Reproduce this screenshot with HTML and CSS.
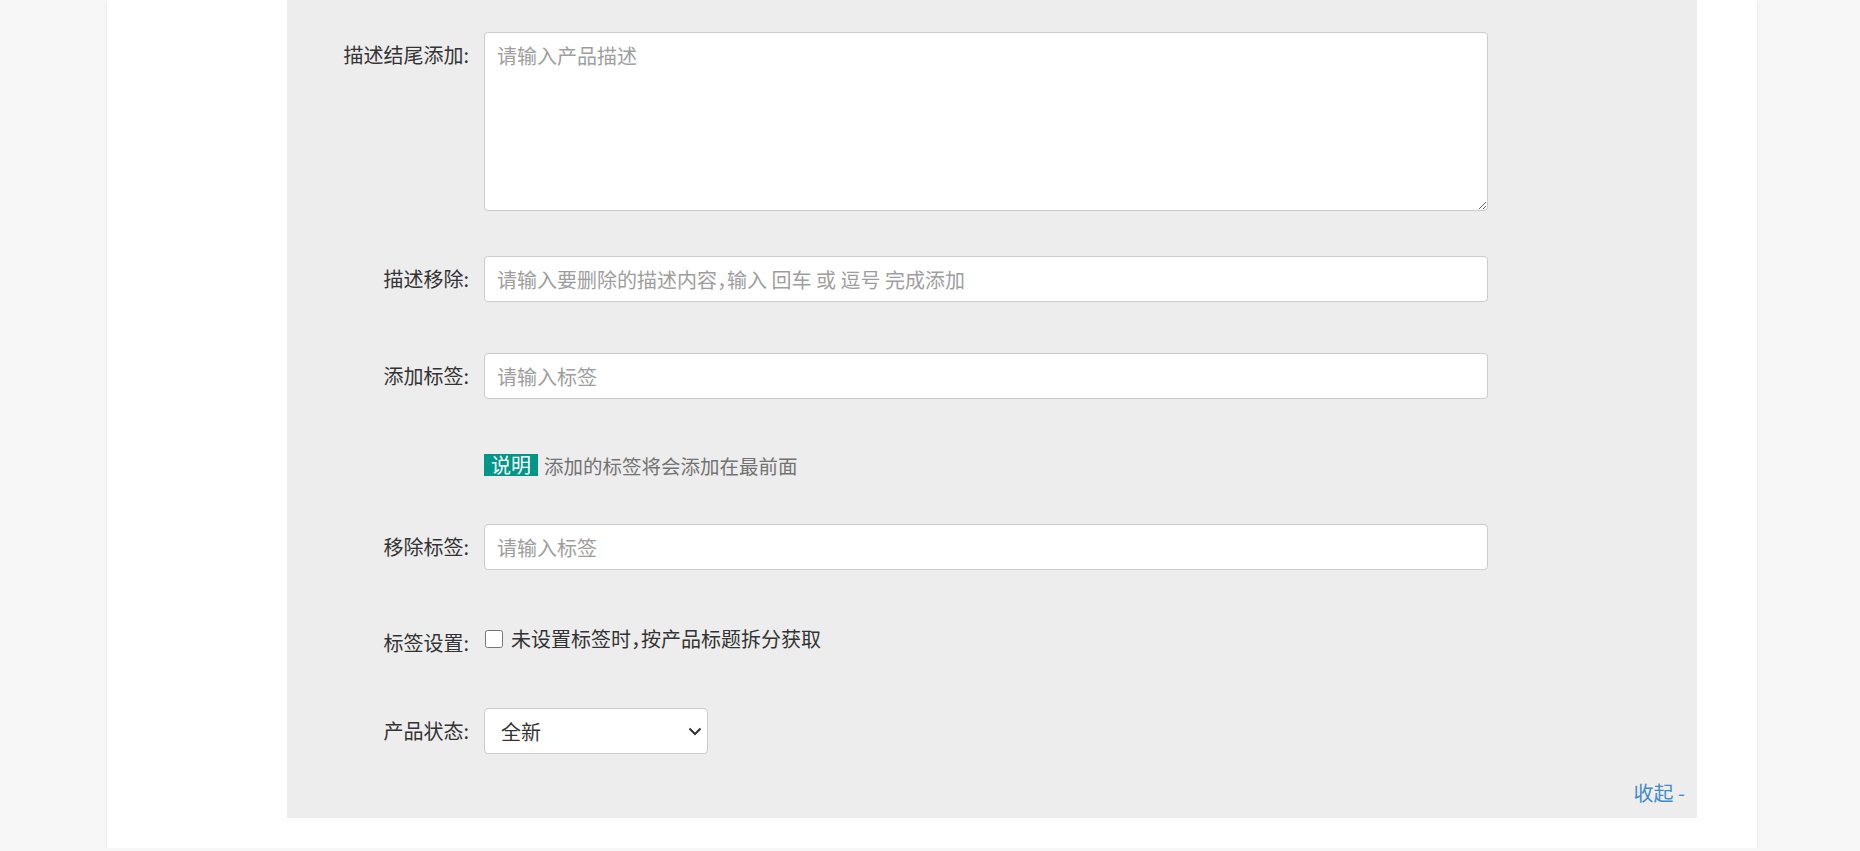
FILE: index.html
```html
<!DOCTYPE html>
<html lang="zh-CN">
<head>
    <meta charset="UTF-8">
    <meta name="viewport" content="width=device-width, initial-scale=1.0">
    <title>产品设置</title>
    <link rel="stylesheet" href="styles.css">
</head>
<body>

    <div class="card">
        <div class="panel">

            <div class="row row-area">
                <label class="label">描述结尾添加:</label>
                <div class="field">
                    <textarea class="control area" placeholder="请输入产品描述"></textarea>
                </div>
            </div>

            <div class="row row-remove">
                <label class="label">描述移除:</label>
                <div class="field">
                    <input class="control" type="text" placeholder="请输入要删除的描述内容，输入 回车 或 逗号 完成添加">
                </div>
            </div>

            <div class="row row-tag">
                <label class="label">添加标签:</label>
                <div class="field">
                    <input class="control" type="text" placeholder="请输入标签">
                </div>
            </div>

            <div class="row row-help">
                <div class="label"></div>
                <div class="field help"><span class="badge">说明</span>添加的标签将会添加在最前面</div>
            </div>

            <div class="row row-untag">
                <label class="label">移除标签:</label>
                <div class="field">
                    <input class="control" type="text" placeholder="请输入标签">
                </div>
            </div>

            <div class="row row-check">
                <label class="label">标签设置:</label>
                <div class="field check">
                    <input type="checkbox" id="split">
                    <label for="split">未设置标签时，按产品标题拆分获取</label>
                </div>
            </div>

            <div class="row row-state">
                <label class="label">产品状态:</label>
                <div class="field">
                    <div class="select-wrap">
                        <select class="control state">
                            <option>全新</option>
                            <option>二手</option>
                        </select>
                        <svg class="caret" width="14" height="9" viewBox="0 0 14 9">
                            <path d="M1.5 1.5l5.5 5.5 5.5-5.5" fill="none" stroke="#333" stroke-width="2"/>
                        </svg>
                    </div>
                </div>
            </div>

            <div class="toggle"><a href="#">收起 -</a></div>

        </div>
    </div>

</body>
</html>
```

FILE: styles.css
```css
*{
    box-sizing: border-box;
}
body{
    margin: 0;
    background-color: #f7f7f7;
    font-family: "Noto Sans CJK SC", "Noto Sans", sans-serif;
    font-size: 20px;
    color: #333;
    font-feature-settings: "halt";
}
.card{
    width: 1650px;
    margin-left: 107px;
    padding: 0 60px 30px 180px;
    background-color: #fff;
    box-shadow: 0 1px 3px rgba(0, 0, 0, 0.08);
}
.panel{
    background-color: #ededed;
    padding: 32px 0 10px;
}
.row{
    display: flex;
    align-items: flex-start;
    gap: 15px;
}
.label{
    width: 182px;
    flex-shrink: 0;
    text-align: right;
    line-height: 46px;
    color: #333;
}
.field{
    width: 1004px;
}
.control{
    display: block;
    width: 100%;
    height: 46px;
    padding: 0 12px;
    border: 1px solid #ccc;
    border-radius: 4px;
    background-color: #fff;
    font: inherit;
    color: #333;
    outline: none;
}
.control::placeholder{
    color: #9e9e9e;
}
.area{
    height: 179px;
    padding: 9px 12px;
    line-height: 28px;
    resize: vertical;
}

.row-area{
    margin-bottom: 45px;
}
.row-remove{
    margin-bottom: 51px;
}
.row-tag{
    margin-bottom: 52px;
}
.row-help{
    margin-bottom: 43px;
}
.row-help .label{
    line-height: 30px;
}
.help{
    line-height: 30px;
    font-size: 19.5px;
    color: #737373;
}
.badge{
    display: inline-block;
    padding: 0 7px;
    margin-right: 6px;
    line-height: 22px;
    font-size: 20px;
    background-color: #009688;
    color: #fff;
    vertical-align: 1px;
}
.row-untag{
    margin-bottom: 54px;
}
.row-check{
    margin-bottom: 50px;
}
.row-check .label{
    line-height: 30px;
    padding-top: 4px;
}
.check{
    display: flex;
    align-items: center;
    gap: 8px;
    line-height: 30px;
}
.check input{
    width: 18px;
    height: 18px;
    margin: 0 0 0 1px;
}
.row-state{
    margin-bottom: 24px;
}
.select-wrap{
    position: relative;
    width: 224px;
}
.state{
    appearance: none;
    -webkit-appearance: none;
    padding: 0 30px 0 16px;
}
.caret{
    position: absolute;
    right: 6px;
    top: 19px;
    pointer-events: none;
}
.toggle{
    text-align: right;
    line-height: 30px;
    padding-right: 12px;
}
.toggle a{
    color: #428bca;
    text-decoration: none;
}
```
